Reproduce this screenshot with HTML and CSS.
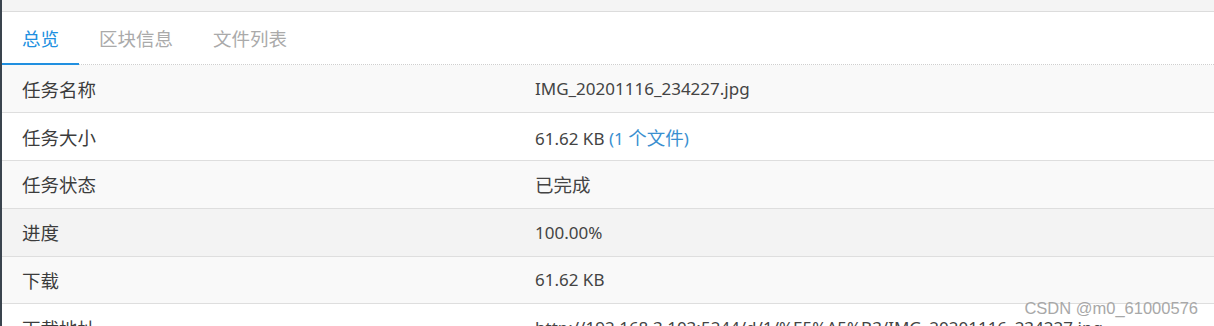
FILE: index.html
```html
<!DOCTYPE html>
<html lang="zh-CN">
<head>
  <meta charset="UTF-8">
  <meta name="viewport" content="width=device-width, initial-scale=1.0">
  <title>任务详情</title>
  <link rel="stylesheet" href="styles.css">
</head>
<body>
  <div class="panel">
    <div class="topbar"></div>

    <ul class="tabs">
      <li class="tab active">总览</li>
      <li class="tab">区块信息</li>
      <li class="tab">文件列表</li>
    </ul>

    <table class="info">
      <tr class="odd">
        <td class="label">任务名称</td>
        <td class="value">IMG_20201116_234227.jpg</td>
      </tr>
      <tr>
        <td class="label">任务大小</td>
        <td class="value">61.62 KB <a class="link">(1 <span class="zh">个文件</span>)</a></td>
      </tr>
      <tr class="odd">
        <td class="label">任务状态</td>
        <td class="value"><span class="zh">已完成</span></td>
      </tr>
      <tr class="hover">
        <td class="label">进度</td>
        <td class="value">100.00%</td>
      </tr>
      <tr class="odd">
        <td class="label">下载</td>
        <td class="value">61.62 KB</td>
      </tr>
      <tr>
        <td class="label">下载地址</td>
        <td class="value">http://192.168.3.103:5244/d/1/%E5%A5%B3/IMG_20201116_234227.jpg</td>
      </tr>
    </table>
  </div>

  <div class="watermark">CSDN @m0_61000576</div>
</body>
</html>
```

FILE: styles.css
```css
html, body {
  margin: 0;
  padding: 0;
  height: 100%;
  overflow: hidden;
}
body {
  font-family: "Noto Sans", "Noto Sans CJK SC", sans-serif;
  font-size: 17px;
  color: #444;
  background: #fff;
  border-left: 2px solid #3a444e;
}
.topbar {
  height: 11px;
  background: #f4f4f4;
  border-bottom: 1px solid #dcdcdc;
}
.tabs {
  display: flex;
  margin: 0;
  padding: 0;
  list-style: none;
  border-bottom: 1px dotted #cfcfcf;
}
.tab {
  height: 49px;
  line-height: 49px;
  padding: 2px 20px 0;
  margin-bottom: -1px;
  font-size: 18.5px;
  color: #aaa;
  border-bottom: 2px solid transparent;
}
.tab.active {
  color: #2190e0;
  border-bottom-color: #2190e0;
}
.info {
  width: 100%;
  border-collapse: collapse;
}
.info tr {
  height: 47.75px;
  border-bottom: 1px solid #dedede;
}
.info tr.odd {
  background: #f9f9f9;
}
.info tr.hover {
  background: #f3f3f3;
}
.info td {
  padding: 0 20px;
  white-space: nowrap;
}
.label {
  width: 473px;
  font-size: 18.5px;
  color: #3c3c3c;
}
.zh {
  font-size: 18.5px;
}
.link {
  color: #3a8fd0;
}
.watermark {
  position: absolute;
  right: 16px;
  top: 299px;
  font-family: "Liberation Sans", Arial, sans-serif;
  font-size: 16.5px;
  color: #a8a8a8;
}
```
